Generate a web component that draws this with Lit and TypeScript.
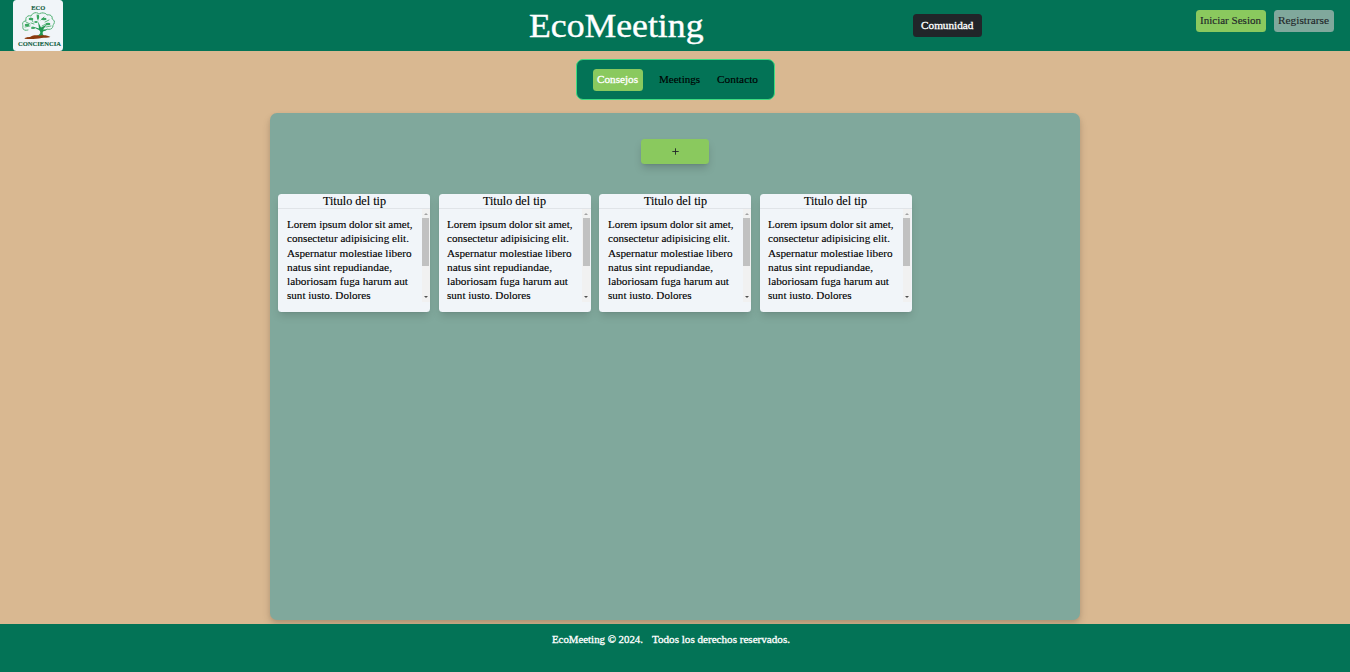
import { LitElement, html, css, svg } from "lit";
import { customElement, property } from "lit/decorators.js";

/** Text whose glyphs are widened so that it fills a given width. */
@customElement("fit-text")
class FitText extends LitElement {
  @property({ type: Number }) width = 0;
  @property() text = "";
  static styles = css`
    :host { display: block; white-space: pre; flex: none; }
    .line { display: inline-block; transform-origin: 0 50%; }
  `;
  firstUpdated() {
    const el = this.renderRoot.querySelector(".line") as HTMLElement;
    el.style.transform = `scaleX(${this.width / el.getBoundingClientRect().width})`;
    this.style.width = `${this.width}px`;
  }
  render() {
    return html`<span class="line">${this.text}</span>`;
  }
}

const fit = (text: string, width: number) =>
  html`<fit-text .text=${text} .width=${width}></fit-text>`;

const LINES: [string, number][] = [
  ["Lorem ipsum dolor sit amet,", 125.5],
  ["consectetur adipisicing elit.", 122],
  ["Aspernatur molestiae libero", 124.5],
  ["natus sint repudiandae,", 105],
  ["laboriosam fuga harum aut", 121],
  ["sunt iusto. Dolores", 83.5],
];

@customElement("tip-card")
class TipCard extends LitElement {
  static styles = css`
    :host {
      display: block; box-sizing: border-box; width: 152px; height: 118.5px;
      background: #f1f5f9; border-radius: 3.5px; color: #000; overflow: hidden;
      box-shadow: 0 5px 8px -1px rgb(0 0 0 / .13), 0 2px 3px -2px rgb(0 0 0 / .12);
    }
    .title {
      display: flex; justify-content: center; height: 15.500px; box-sizing: border-box;
      font-size: 12px; line-height: 15.500px; border-bottom: 1px solid #e0e4e8;
    }
    .body { display: flex; justify-content: space-between; height: 92.500px; }
    .text { padding: 9px 0 0 8.5px; font-size: 10.4px; line-height: 14.25px; }
    .bar { width: 8px; background: #f1f1f1; margin-right: .7px; display: flex; flex-direction: column; align-items: center; }
    .up, .down { width: 0; height: 0; border: 2px solid transparent; }
    .up { border-top: 0; border-bottom: 2.5px solid #a3a3a3; margin-top: 4px; }
    .thumb { width: 7px; height: 48px; background: #c1c1c1; margin-top: 2.500px; }
    .down { border-bottom: 0; border-top: 2.5px solid #505050; margin-top: auto; margin-bottom: 4px; }
  `;
  render() {
    return html`
      <div class="title">${fit("Titulo del tip", 63)}</div>
      <div class="body">
        <div class="text">${LINES.map(([t, w]) => fit(t, w))}</div>
        <div class="bar"><i class="up"></i><i class="thumb"></i><i class="down"></i></div>
      </div>`;
  }
}

const logo = svg`
  <g fill="none" stroke="#3aa660" stroke-width=".8" stroke-linecap="round">
    <path d="M15 30c-4 1-6-1-5-4-1-3 0-5 3-5-1-4 2-6 5-5 2-4 6-4 8-2 3-2 7-1 8 1 4-1 6 2 5 4 3 1 3 4 1 6 0 4-3 5-6 4-2 2-4 2-6 0" stroke-dasharray="2.200 .5"/>
    <path d="M13 22l4 2M18 18l2 4M24 15l1 5M31 17l-3 3M36 20l-4 2M12 27l5-1M38 26l-5 1M21 24l-3-1M29 26l4-2"/>
  </g>
  <g fill="#3aa660">
    <ellipse cx="18" cy="19" rx="2.400" ry="1.200"/><ellipse cx="31" cy="19" rx="2.600" ry="1.200"/>
    <ellipse cx="14" cy="25" rx="2.300" ry="1.200"/><ellipse cx="35" cy="24" rx="2.400" ry="1.200"/>
    <ellipse cx="25" cy="17" rx="1.200" ry="2.400"/><ellipse cx="20" cy="28" rx="2.200" ry="1"/>
    <ellipse cx="23" cy="22" rx="1.800" ry="1"/>
  </g>
  <path d="M24 36c4-2 4-4 2-6l-8-4 8 2.500-1-7 3 6 6-3-4 5 5 0-5 2c-1 2 0 4 2 5z" fill="#229852"/>
  <path d="M11.500 38.700c1-2 4-1.300 6-2 3-1.700 6-1.500 9-1 4-.7 8-.5 11 1.300-3 1-6 .5-9 1-5 .8-11 1.600-17 .7z" fill="#8b3a0e"/>
  <g fill="#12603f" stroke="#12603f" stroke-width=".15" font-family="Liberation Serif, serif" font-weight="700" font-size="7">
    <text x="18.300" y="10.300" textLength="14" lengthAdjust="spacingAndGlyphs">ECO</text>
    <text x="5" y="46" textLength="43" lengthAdjust="spacingAndGlyphs">CONCIENCIA</text>
  </g>`;

@customElement("app-root")
class AppRoot extends LitElement {
  static styles = css`
    :host {
      display: flex; flex-direction: column; box-sizing: border-box; width: 100%; height: 672px;
      background: #d9b891; color: #000; overflow: hidden;
      font-family: "Liberation Serif", serif; font-size: 10.4px; line-height: 14px;
      -webkit-text-stroke: .12px currentColor;
    }
    header {
      display: grid; grid-template-columns: 528.500px 384.300px 1fr auto; height: 50.6px; flex: none;
      background: #037356; color: #fff;
    }
    .logo { width: 50.5px; height: 50.6px; margin-left: 12.700px; background: #f1f5f9; border-radius: 3.500px; display: block; -webkit-text-stroke: 0; }
    .name { font-size: 34px; line-height: 52px; -webkit-text-stroke: .4px currentColor; }
    .btn { box-sizing: border-box; display: flex; justify-content: center; align-items: center; border-radius: 3.500px; }
    .community { width: 69px; height: 23px; margin-top: 14px; padding-top: 1px; background: #212529; }
    .auth { display: flex; gap: 8.500px; padding: 9.500px 16.300px 0 0; color: #212529; }
    .login, .register { height: 22.500px; padding-top: 1px; }
    .login { width: 69.500px; background: #8ac95e; }
    .register { width: 59.500px; background: #80a89c; }
    nav {
      box-sizing: border-box; align-self: center; display: flex; align-items: center; flex: none;
      width: 199px; height: 41px; margin-top: 8.900px; padding-left: 16.500px;
      background: #037356; border: 1px solid #3edc81; border-radius: 7px;
    }
    .active { width: 49.500px; height: 22.500px; margin-right: 16.500px; background: #8ac95e; color: #fff; }
    .strong { -webkit-text-stroke: .3px currentColor; }
    .meet { margin-right: 16.500px; }
    main {
      box-sizing: border-box; align-self: center; display: flex; flex-direction: column; flex: none;
      width: 810.500px; height: 506.500px; margin-top: 12.900px; padding: 25.700px 8.500px;
      background: #80a89c; border-radius: 7px;
      box-shadow: 0 5px 9px rgb(0 0 0 / .14), 0 2px 4px rgb(0 0 0 / .08);
    }
    .add {
      align-self: center; width: 67.500px; height: 25px; padding-bottom: 1px; background: #8ac95e;
      box-shadow: 0 5px 8px -1px rgb(0 0 0 / .17), 0 2px 3px -2px rgb(0 0 0 / .15);
    }
    .tips { display: flex; gap: 8.400px; margin: 29.500px 0 0 .2px; }
    footer {
      display: flex; justify-content: center; gap: 9px; box-sizing: border-box; flex: none;
      height: 48px; margin-top: auto; padding: 9px 8px 0 0; background: #037356; color: #fff;
    }
  `;
  render() {
    return html`
      <header>
        <svg class="logo" viewBox="0 0 50.5 50.6">${logo}</svg>
        <div class="name">${fit("EcoMeeting", 174.5)}</div>
        <div class="btn community strong">${fit("Comunidad", 52.5)}</div>
        <div class="auth">
          <div class="btn login">${fit("Iniciar Sesion", 61)}</div>
          <div class="btn register">${fit("Registrarse", 51)}</div>
        </div>
      </header>
      <nav>
        <div class="btn active strong">${fit("Consejos", 41)}</div>
        <div class="meet">${fit("Meetings", 41)}</div>
        <div>${fit("Contacto", 41)}</div>
      </nav>
      <main>
        <div class="btn add">
          <svg width="7" height="7" viewBox="0 0 7 7"><path d="M3.500 .3v6.400M.3 3.500h6.400" stroke="#212529" stroke-width=".9"/></svg>
        </div>
        <div class="tips">${[0, 1, 2, 3].map(() => html`<tip-card></tip-card>`)}</div>
      </main>
      <footer class="strong">
        ${fit("EcoMeeting © 2024.", 91)}${fit("Todos los derechos reservados.", 138)}
      </footer>`;
  }
}
